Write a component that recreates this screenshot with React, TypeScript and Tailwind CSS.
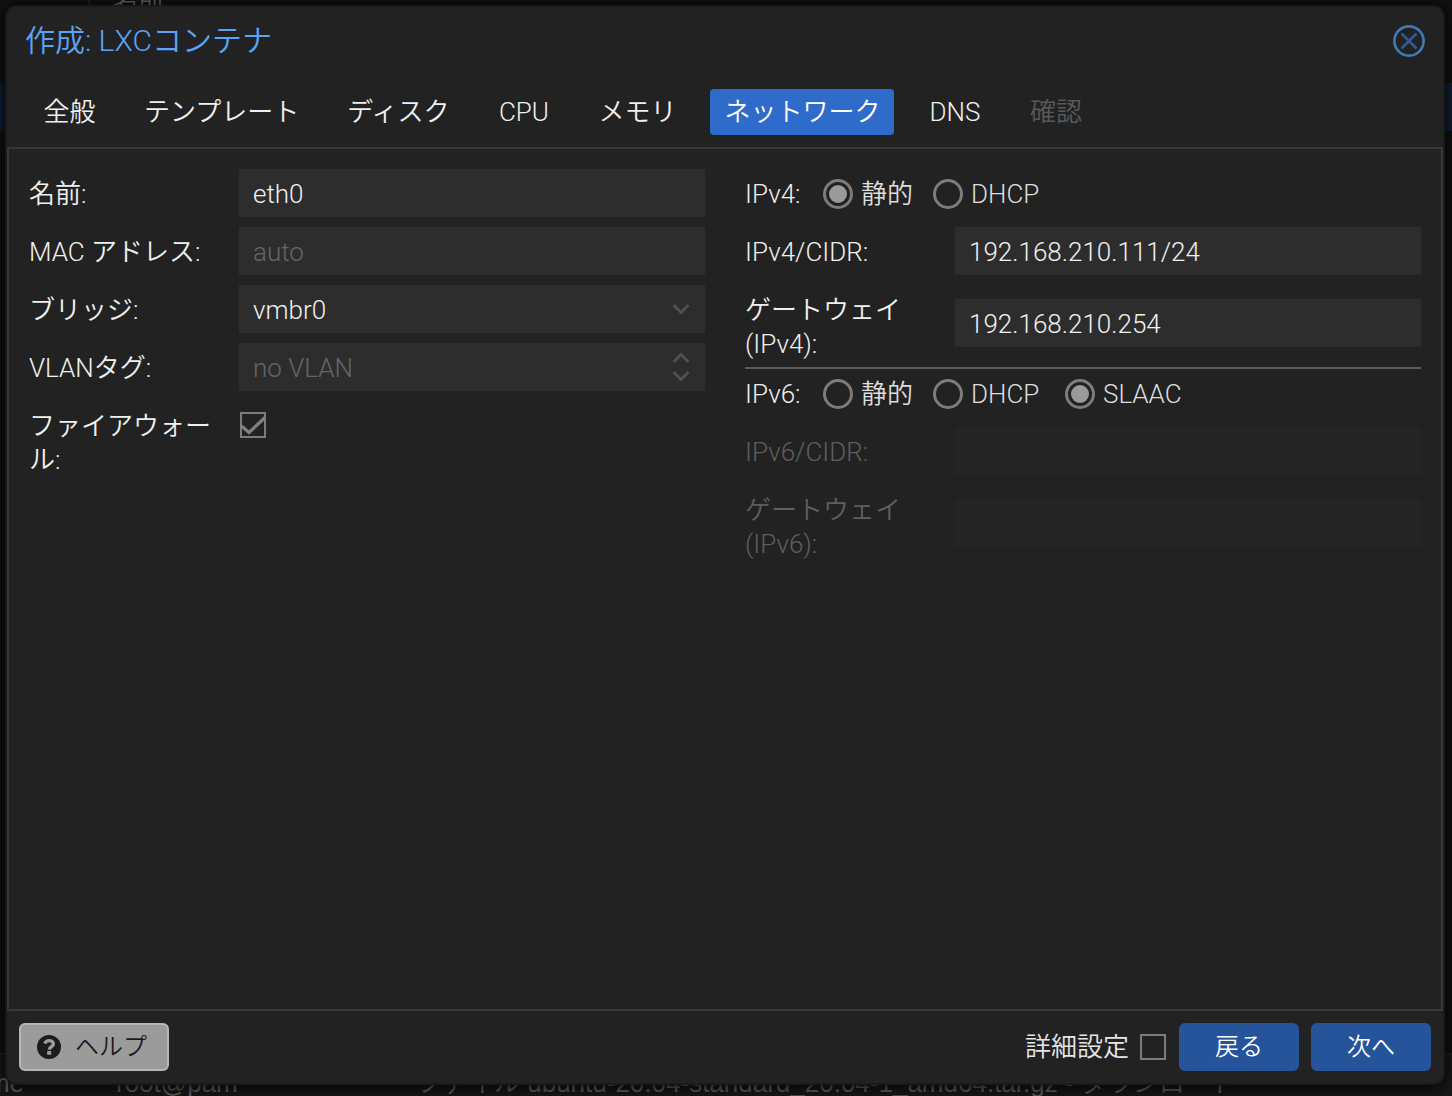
import { useState } from "react";
import type { ReactNode } from "react";

const TABS = [
  { name: "全般" },
  { name: "テンプレート" },
  { name: "ディスク" },
  { name: "CPU" },
  { name: "メモリ" },
  { name: "ネットワーク" },
  { name: "DNS" },
  { name: "確認", disabled: true },
];

const FIELD =
  "h-12 w-full min-w-0 appearance-none bg-[#2d2d2d] px-3.5 pt-0.5 text-[26px] text-[#f0f0f0] outline-none placeholder:text-[#656565] disabled:bg-[#252525]";

type RowProps = { id: string; label: string; dim?: boolean; top?: boolean; children: ReactNode };

function Row({ id, label, dim, top, children }: RowProps) {
  return (
    <div className="flex items-start">
      <label
        htmlFor={id}
        className={
          dim
            ? "w-[210px] shrink-0 pt-2 pr-2.5 leading-[34px] text-[#5e5e5e]"
            : "w-[210px] shrink-0 pt-2 pr-2.5 leading-[34px]"
        }
      >
        {label}
      </label>
      <div
        className={
          top
            ? "relative flex h-12 min-w-0 flex-1 items-center"
            : "relative flex h-12 min-w-0 flex-1 items-center self-center"
        }
      >
        {children}
      </div>
    </div>
  );
}

type RadioProps = { group: string; label: string; value: string; onPick: (v: string) => void };

function Radio({ group, label, value, onPick }: RadioProps) {
  return (
    <label className="flex items-center gap-2 text-[#dedede]">
      <input
        type="radio"
        name={group}
        checked={value === label}
        onChange={() => onPick(label)}
        className="grid size-[30px] appearance-none place-items-center rounded-full border-[3px] border-[#7c7c7c] before:size-[18px] before:rounded-full checked:before:bg-[#9a9a9a]"
      />
      {label}
    </label>
  );
}

type RadioRowProps = { title: string; options: string[]; value: string; onPick: (v: string) => void };

function RadioRow({ title, options, value, onPick }: RadioRowProps) {
  return (
    <div
      role="radiogroup"
      aria-label={title}
      className="grid h-12 grid-cols-[58px_90px_112px_auto] items-center justify-start gap-5 pt-0.5"
    >
      <span>{title}:</span>
      {options.map((o) => (
        <Radio key={o} group={title} label={o} value={value} onPick={onPick} />
      ))}
    </div>
  );
}

function CheckBox({ id, defaultChecked }: { id: string; defaultChecked?: boolean }) {
  return (
    <span className="grid size-7 place-items-center">
      <input
        id={id}
        type="checkbox"
        defaultChecked={defaultChecked}
        className="peer col-start-1 row-start-1 size-[26px] appearance-none border-2 border-[#7c7c7c]"
      />
      <svg
        viewBox="0 0 28 28"
        className="pointer-events-none invisible col-start-1 row-start-1 size-7 peer-checked:visible"
        fill="none"
        stroke="#808080"
        strokeWidth="3.2"
      >
        <path d="M2.5 15L10 21.5L26 6.5" />
      </svg>
    </span>
  );
}

function Chevron({ up }: { up?: boolean }) {
  return (
    <svg viewBox="0 0 18 12" className="h-3 w-[18px]" fill="none" stroke="#505050" strokeWidth="3">
      <path d={up ? "M1.5 10L9 2.5L16.5 10" : "M1.5 2L9 9.5L16.5 2"} />
    </svg>
  );
}

function Backdrop() {
  return (
    <div
      aria-hidden="true"
      className="absolute inset-0 flex flex-col justify-between overflow-hidden font-['Liberation_Sans','Noto_Sans_CJK_JP',sans-serif] text-[#626262]"
    >
      <div>
        <div className="flex h-[18px] items-end">
          <span className="h-full w-[90px] border-r-2 border-[#1e1e1e]" />
          <span className="pl-[22px] leading-[34px]">名前</span>
        </div>
        <div className="mt-[65px] h-12 w-full bg-[#0f2036]" />
      </div>
      <div className="flex h-[43px] items-center border-t-2 border-[#202020] bg-[#181818] pt-4 whitespace-nowrap">
        <span className="flex w-6 shrink-0 justify-end">me</span>
        <span className="w-[392px] shrink-0 pl-[92px]">root@pam</span>
        <span>ファイル ubuntu-20.04-standard_20.04-1_amd64.tar.gz - ダウンロード</span>
      </div>
    </div>
  );
}

export default function App() {
  const [tab, setTab] = useState("ネットワーク");
  const [v4, setV4] = useState("静的");
  const [v6, setV6] = useState("SLAAC");

  return (
    <div className="relative flex min-h-screen bg-[#111111] pt-[5px] pr-[7px] pb-[11px] pl-[5px] font-['Roboto','Noto_Sans_CJK_JP',sans-serif] text-[26px] leading-[35px] font-[350] text-[#f0f0f0]">
      <Backdrop />
      <section
        role="dialog"
        aria-labelledby="dialog-title"
        className="relative flex flex-1 flex-col rounded-xl border-2 border-[#1a1a1a] bg-[#222222] shadow-[0_2px_16px_0_#000000]"
      >
        <header className="flex items-center justify-between px-[18px] pt-3.5">
          <h1 id="dialog-title" className="text-[30px] leading-10 text-[#5ba3f8]">
            作成: LXCコンテナ
          </h1>
          <button type="button" aria-label="閉じる" className="size-8">
            <svg viewBox="0 0 32 32" className="size-8" fill="none">
              <circle cx="16" cy="16" r="14.6" stroke="#3f7ab5" strokeWidth="2.6" />
              <path d="M8.5 8.5L23.5 23.5M23.5 8.5L8.5 23.5" stroke="#2f5b94" strokeWidth="2.6" />
            </svg>
          </button>
        </header>

        <nav className="flex gap-5 px-[22px] pt-7 pb-3">
          {TABS.map((t) => (
            <button
              key={t.name}
              type="button"
              disabled={t.disabled}
              onClick={() => setTab(t.name)}
              className={
                t.name === tab
                  ? "h-[46px] min-w-[81px] rounded-sm bg-[#2f6bcb] px-3.5 whitespace-nowrap text-white"
                  : "h-[46px] min-w-[81px] rounded-sm px-3.5 whitespace-nowrap disabled:text-[#595959]"
              }
            >
              {t.name}
            </button>
          ))}
        </nav>

        <main className="grid flex-1 grid-cols-2 content-start gap-10 border-2 border-[#383838] p-5">
          <div className="flex flex-col gap-2.5">
            <Row id="name" label="名前:">
              <input id="name" className={FIELD} defaultValue="eth0" />
            </Row>
            <Row id="mac" label="MAC アドレス:">
              <input id="mac" className={FIELD} placeholder="auto" />
            </Row>
            <Row id="bridge" label="ブリッジ:">
              <select id="bridge" className={FIELD}>
                <option>vmbr0</option>
              </select>
              <span className="pointer-events-none absolute right-[15px] flex">
                <Chevron />
              </span>
            </Row>
            <Row id="vlan" label="VLANタグ:">
              <input id="vlan" className={FIELD} placeholder="no VLAN" />
              <span className="absolute right-[15px] flex flex-col gap-1.5">
                <button type="button" aria-label="増やす">
                  <Chevron up />
                </button>
                <button type="button" aria-label="減らす">
                  <Chevron />
                </button>
              </span>
            </Row>
            <Row id="firewall" label="ファイアウォール:" top>
              <CheckBox id="firewall" defaultChecked />
            </Row>
          </div>

          <div className="flex flex-col gap-2.5">
            <RadioRow title="IPv4" options={["静的", "DHCP"]} value={v4} onPick={setV4} />
            <Row id="cidr4" label="IPv4/CIDR:">
              <input id="cidr4" className={FIELD} defaultValue="192.168.210.111/24" />
            </Row>
            <Row id="gw4" label="ゲートウェイ (IPv4):">
              <input id="gw4" className={FIELD} defaultValue="192.168.210.254" />
            </Row>
            <div className="-mt-1 border-t-2 border-[#5c5c5c]">
              <RadioRow title="IPv6" options={["静的", "DHCP", "SLAAC"]} value={v6} onPick={setV6} />
            </div>
            <Row id="cidr6" label="IPv6/CIDR:" dim>
              <input id="cidr6" className={FIELD} disabled />
            </Row>
            <Row id="gw6" label="ゲートウェイ (IPv6):" dim>
              <input id="gw6" className={FIELD} disabled />
            </Row>
          </div>
        </main>

        <footer className="flex items-center gap-3 p-3">
          <button
            type="button"
            className="flex h-12 w-[150px] items-center gap-3.5 rounded-md border-2 border-[#b6b6b6] bg-[#9b9b9b] px-4 text-2xl text-[#1c1c1c]"
          >
            <svg viewBox="0 0 24 24" className="size-6 shrink-0">
              <circle cx="12" cy="12" r="12" fill="#1c1c1c" />
              <path
                d="M7.8 8.6C8.6 6.6 10 5.6 12 5.6C14.6 5.6 16.4 7 16.4 9.1C16.4 11.8 12.2 11.8 12.2 14.8"
                fill="none"
                stroke="#9b9b9b"
                strokeWidth="3.4"
              />
              <rect x="10.2" y="16" width="4" height="3.8" fill="#9b9b9b" />
            </svg>
            ヘルプ
          </button>
          <div className="flex-1" />
          <div className="flex items-center gap-2.5">
            <label htmlFor="advanced" className="text-[#e6e6e6]">
              詳細設定
            </label>
            <CheckBox id="advanced" />
          </div>
          <button type="button" className="h-12 w-[120px] rounded-md bg-[#25549b] text-2xl text-white">
            戻る
          </button>
          <button type="button" className="h-12 w-[120px] rounded-md bg-[#25549b] text-2xl text-white">
            次へ
          </button>
        </footer>
      </section>
    </div>
  );
}
